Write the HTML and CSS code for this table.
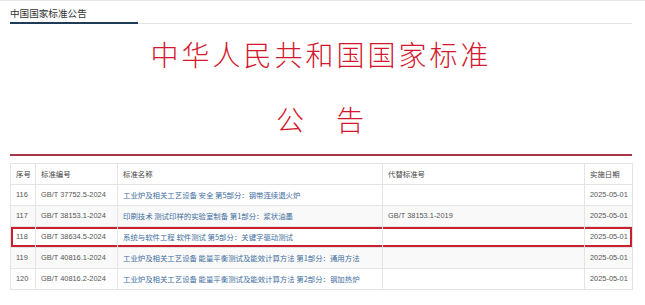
FILE: index.html
```html
<!DOCTYPE html>
<html lang="zh-CN">
<head>
<meta charset="utf-8">
<title>中国国家标准公告</title>
<link rel="stylesheet" href="styles.css">
</head>
<body>
<div class="page">
  <div class="tabs"><span class="tab">中国国家标准公告</span></div>
  <h1 class="title">中华人民共和国国家标准</h1>
  <h2 class="subtitle">公　告</h2>
  <div class="rule"></div>
  <table class="std">
    <colgroup>
      <col class="c1"><col class="c2"><col class="c3"><col class="c4"><col class="c5">
    </colgroup>
    <thead>
      <tr><th>序号</th><th>标准编号</th><th>标准名称</th><th>代替标准号</th><th>实施日期</th></tr>
    </thead>
    <tbody>
      <tr><td>116</td><td>GB/T 37752.5-2024</td><td><a class="lnk" href="#">工业炉及相关工艺设备 安全 第5部分：钢带连续退火炉</a></td><td></td><td>2025-05-01</td></tr>
      <tr><td>117</td><td>GB/T 38153.1-2024</td><td><a class="lnk" href="#">印刷技术 测试印样的实验室制备 第1部分：浆状油墨</a></td><td>GB/T 38153.1-2019</td><td>2025-05-01</td></tr>
      <tr class="hl"><td>118</td><td>GB/T 38634.5-2024</td><td><a class="lnk" href="#">系统与软件工程 软件测试 第5部分：关键字驱动测试</a></td><td></td><td>2025-05-01</td></tr>
      <tr><td>119</td><td>GB/T 40816.1-2024</td><td><a class="lnk" href="#">工业炉及相关工艺设备 能量平衡测试及能效计算方法 第1部分：通用方法</a></td><td></td><td>2025-05-01</td></tr>
      <tr><td>120</td><td>GB/T 40816.2-2024</td><td><a class="lnk" href="#">工业炉及相关工艺设备 能量平衡测试及能效计算方法 第2部分：钢加热炉</a></td><td></td><td>2025-05-01</td></tr>
    </tbody>
  </table>
</div>
</body>
</html>
```
FILE: styles.css
```css
html, body {
  margin: 0;
  padding: 0;
  background: #fff;
}
body {
  font-family: "Liberation Sans", "Noto Sans CJK SC", sans-serif;
  border-top: 1px solid #e6e6e6;
}
.page {
  padding: 0 13px 0 10px;
}
.tabs {
  padding-top: 4px;
  border-bottom: 1px solid #e3e3e3;
  line-height: 14px;
}
.tab {
  display: inline-block;
  width: 128px;
  padding-bottom: 2px;
  margin-bottom: -1px;
  border-bottom: 2px solid #1f3b57;
  font-family: "Noto Sans CJK SC", sans-serif;
  font-size: 9.6px;
  color: #333;
}
.title {
  margin: 16px 0 0;
  text-align: center;
  font-family: "Noto Sans CJK SC", sans-serif;
  font-weight: 300;
  font-size: 28px;
  line-height: 28px;
  letter-spacing: 3px;
  color: #d3182e;
}
.subtitle {
  margin: 37px 0 0;
  text-align: center;
  font-family: "Noto Sans CJK SC", sans-serif;
  font-weight: 300;
  font-size: 28px;
  line-height: 28px;
  letter-spacing: 2px;
  color: #d3182e;
}
.rule {
  margin-top: 21px;
  height: 2px;
  background: #a8364a;
}
.std {
  margin-top: 7px;
  width: 622px;
  table-layout: fixed;
  border-collapse: collapse;
  font-size: 7.4px;
  color: #555;
}
.c1 { width: 25px; }
.c2 { width: 82px; }
.c3 { width: 265px; }
.c4 { width: 202px; }
.c5 { width: 48px; }
.std tr {
  height: 21px;
}
.std th, .std td {
  border: 1px solid #e4e4e4;
  padding: 0 5px;
  line-height: 12px;
  text-align: left;
  white-space: nowrap;
  overflow: hidden;
  font-weight: normal;
  vertical-align: middle;
}
.std th {
  color: #444;
  font-family: "Noto Sans CJK SC", sans-serif;
}
.std tbody tr:nth-child(even) td {
  background: #f9f9f9;
}
.lnk {
  color: #3d6d9e;
  text-decoration: none;
  font-family: "Noto Sans CJK SC", sans-serif;
}
.std tr.hl td {
  box-shadow: inset 0 2px 0 #c8202f, inset 0 -2px 0 #c8202f;
}
.std tr.hl td:first-child {
  box-shadow: inset 0 2px 0 #c8202f, inset 0 -2px 0 #c8202f, inset 2px 0 0 #c8202f;
}
.std tr.hl td:last-child {
  box-shadow: inset 0 2px 0 #c8202f, inset 0 -2px 0 #c8202f, inset -2px 0 0 #c8202f;
}
```
